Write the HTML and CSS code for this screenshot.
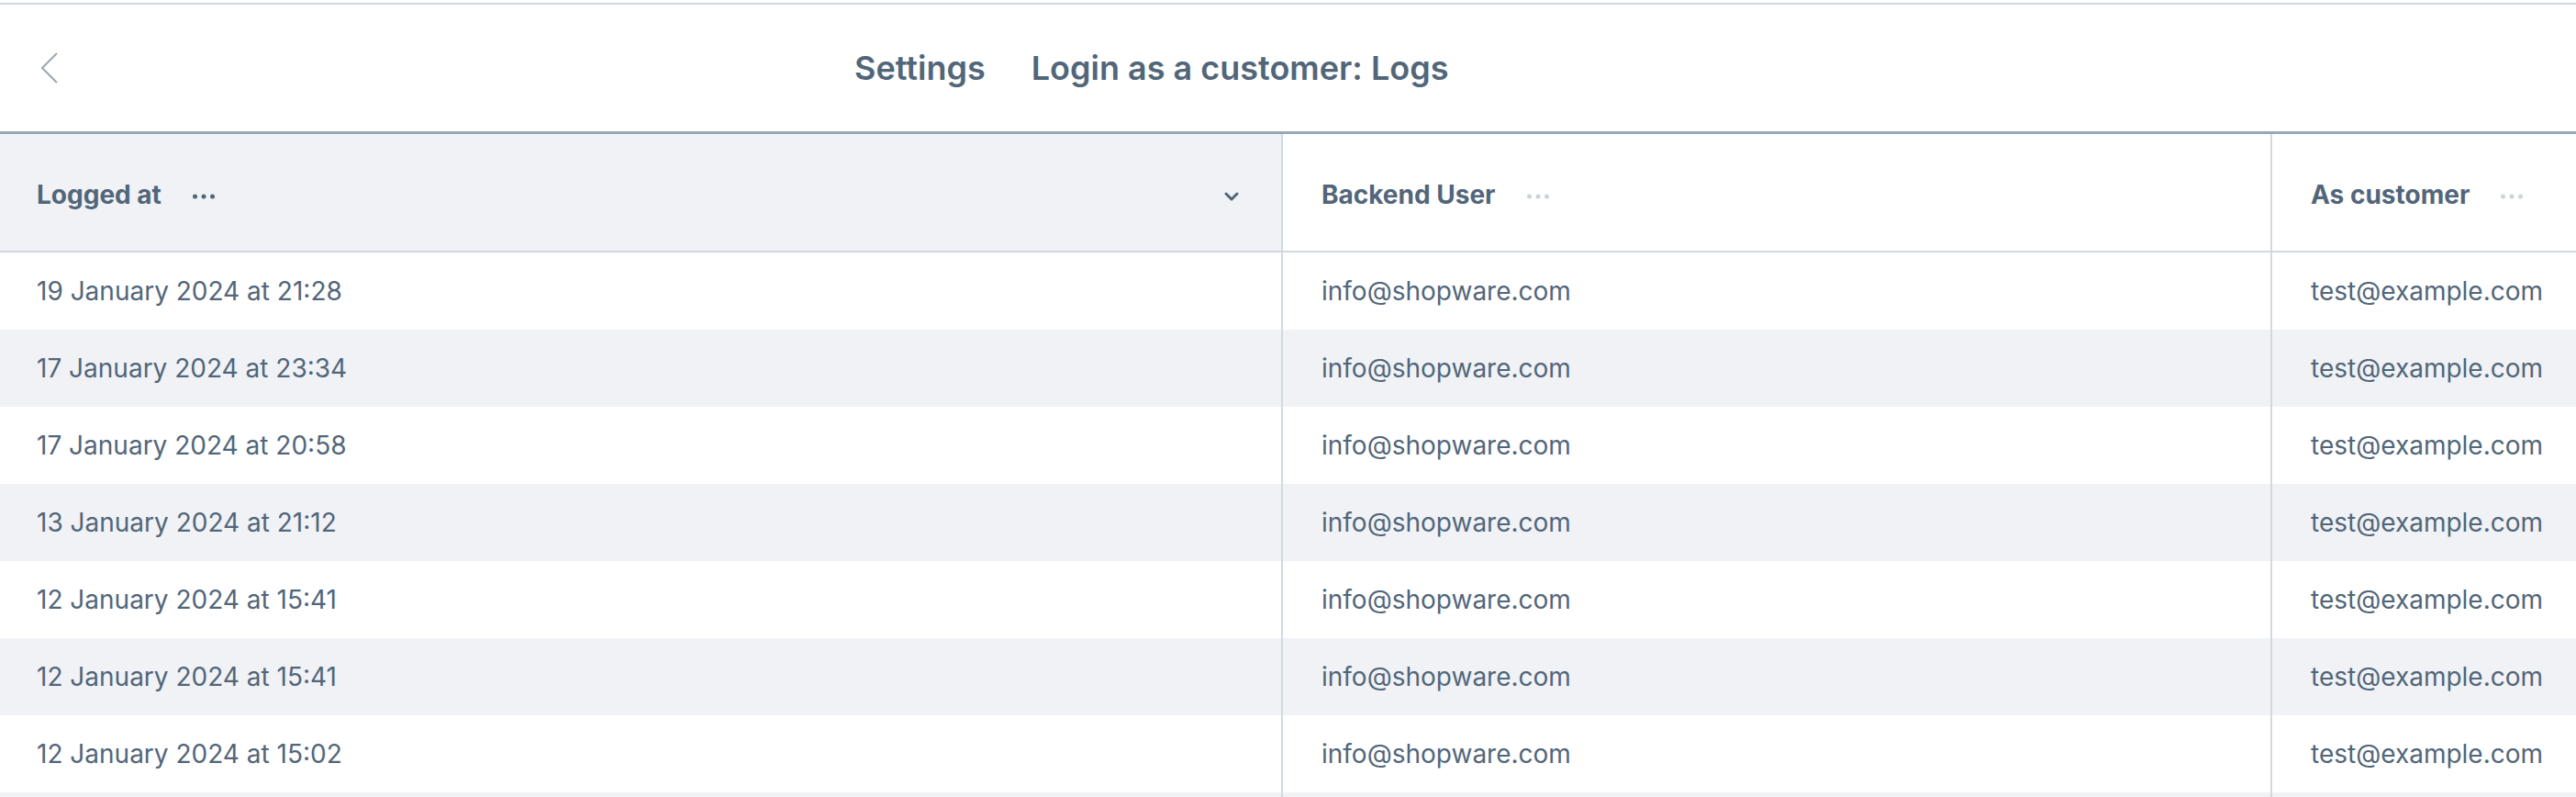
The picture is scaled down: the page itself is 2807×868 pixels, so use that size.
FILE: index.html
```html
<!DOCTYPE html>
<html lang="en">
<head>
<meta charset="utf-8">
<title>Login as a customer: Logs</title>
<link rel="stylesheet" href="styles.css">
</head>
<body>
<div class="page">
  <header class="smartbar">
    <button class="back" aria-label="Back">
      <svg width="20" height="36" viewBox="0 0 20 36"><polyline points="17,2 1,18 17,34" fill="none" stroke="#9aa8b6" stroke-width="2"/></svg>
    </button>
    <h1 class="title"><span class="crumb">Settings</span><span class="crumb">Login as a customer: Logs</span></h1>
  </header>
  <div class="grid">
    <div class="row head">
      <div class="cell sorted">
        <span class="label">Logged at</span>
        <svg class="dots" width="24" height="6" viewBox="0 0 24 6"><circle cx="2.5" cy="3" r="2.5" fill="#52667a"/><circle cx="12" cy="3" r="2.5" fill="#52667a"/><circle cx="21.5" cy="3" r="2.5" fill="#52667a"/></svg>
        <svg class="sort" width="16" height="10" viewBox="0 0 16 10"><polyline points="2,2 8,8 14,2" fill="none" stroke="#52667a" stroke-width="3" stroke-linecap="round" stroke-linejoin="round"/></svg>
      </div>
      <div class="cell">
        <span class="label">Backend User</span>
        <svg class="dots" width="24" height="6" viewBox="0 0 24 6"><circle cx="2.5" cy="3" r="2.5" fill="#cbd4dd"/><circle cx="12" cy="3" r="2.5" fill="#cbd4dd"/><circle cx="21.5" cy="3" r="2.5" fill="#cbd4dd"/></svg>
      </div>
      <div class="cell">
        <span class="label">As customer</span>
        <svg class="dots" width="24" height="6" viewBox="0 0 24 6"><circle cx="2.5" cy="3" r="2.5" fill="#cbd4dd"/><circle cx="12" cy="3" r="2.5" fill="#cbd4dd"/><circle cx="21.5" cy="3" r="2.5" fill="#cbd4dd"/></svg>
      </div>
    </div>
    <div class="row"><div class="cell">19 January 2024 at 21:28</div><div class="cell">info@shopware.com</div><div class="cell">test@example.com</div></div>
    <div class="row"><div class="cell">17 January 2024 at 23:34</div><div class="cell">info@shopware.com</div><div class="cell">test@example.com</div></div>
    <div class="row"><div class="cell">17 January 2024 at 20:58</div><div class="cell">info@shopware.com</div><div class="cell">test@example.com</div></div>
    <div class="row"><div class="cell">13 January 2024 at 21:12</div><div class="cell">info@shopware.com</div><div class="cell">test@example.com</div></div>
    <div class="row"><div class="cell">12 January 2024 at 15:41</div><div class="cell">info@shopware.com</div><div class="cell">test@example.com</div></div>
    <div class="row"><div class="cell">12 January 2024 at 15:41</div><div class="cell">info@shopware.com</div><div class="cell">test@example.com</div></div>
    <div class="row"><div class="cell">12 January 2024 at 15:02</div><div class="cell">info@shopware.com</div><div class="cell">test@example.com</div></div>
    <div class="row"><div class="cell"></div><div class="cell"></div><div class="cell"></div></div>
  </div>
</div>
</body>
</html>
```
FILE: styles.css
```css
html, body {
  margin: 0;
  padding: 0;
  background: #ffffff;
  overflow: hidden;
}
.page {
  width: 2807px;
  height: 868px;
  overflow: hidden;
  font-family: Inter, "Noto Sans", sans-serif;
  color: #52667a;
  padding-top: 3px;
  box-sizing: border-box;
}
.smartbar {
  border-top: 2px solid #d1d9e0;
  border-bottom: 3px solid #9aa8b6;
  height: 138px;
  display: flex;
  align-items: center;
}
.back {
  border: 0;
  background: none;
  padding: 0;
  margin-left: 45px;
  width: 20px;
  height: 36px;
  display: flex;
  align-items: center;
  cursor: pointer;
}
.title {
  margin: 0 0 0 866px;
  display: flex;
  gap: 50px;
  font-size: 36px;
  font-weight: 600;
  line-height: 1;
  white-space: nowrap;
}
.grid {
  display: flex;
  flex-direction: column;
}
.row {
  display: grid;
  grid-template-columns: 1398px 1078px 1fr;
  height: 84px;
}
.row:nth-child(odd) {
  background: #f0f2f5;
}
.row.head {
  height: 127px;
  background: #ffffff;
  border-bottom: 2px solid #d1d9e0;
}
.cell {
  display: flex;
  align-items: center;
  padding-left: 42px;
  font-size: 28px;
  white-space: nowrap;
  border-right: 2px solid #d1d9e0;
}
.cell:first-child {
  padding-left: 40px;
}
.cell:last-child {
  border-right: 0;
}
.head .cell {
  font-weight: 700;
  padding-top: 4px;
}
.head .cell.sorted {
  background: #f0f2f5;
}
.dots {
  margin-left: 34px;
  margin-top: 4px;
  flex: none;
}
.sort {
  margin-left: auto;
  margin-right: 46px;
  margin-top: 4px;
  flex: none;
}
```
